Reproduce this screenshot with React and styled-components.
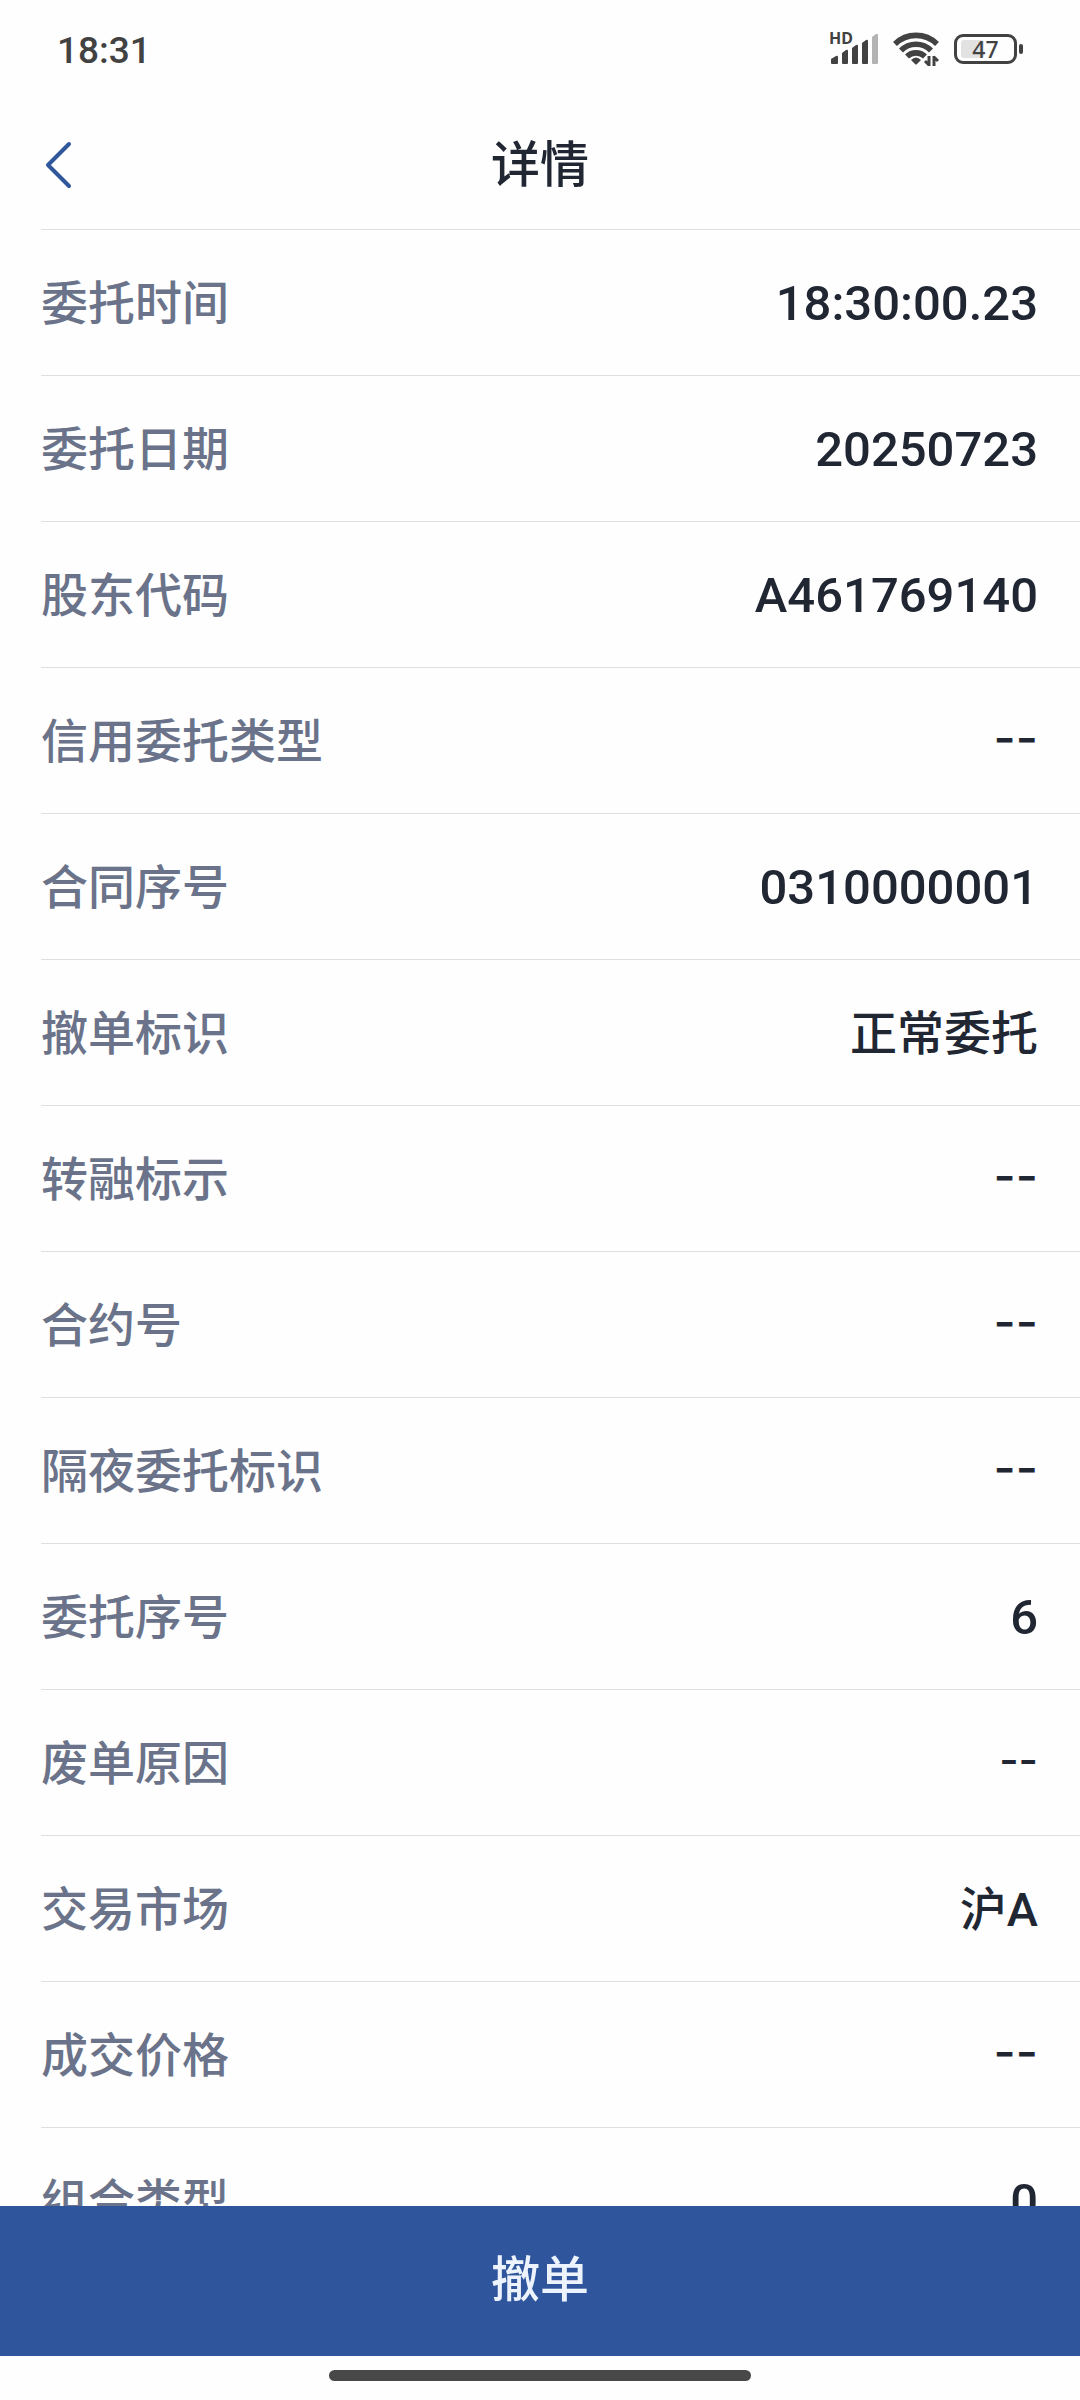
import React from "react";
import styled, { createGlobalStyle } from "styled-components";

const App = () => (
  <Screen>
    <GlobalStyle />
    <StatusBar>
      <Clock>18:31</Clock>
      <StatusIcons>
        <SignalIcon />
        <WifiIcon />
        <Battery>
          <BatteryBody>
            <BatteryFill $level={47} />
            <BatteryLevel>47</BatteryLevel>
          </BatteryBody>
          <BatteryTip />
        </Battery>
      </StatusIcons>
    </StatusBar>
    <Header>
      <BackButton type="button" aria-label="返回">
        <svg width="28" height="48" viewBox="0 0 28 48" fill="none">
          <path
            d="M24 3L3 24L24 45"
            stroke="#30569c"
            strokeWidth="4"
            strokeLinecap="round"
            strokeLinejoin="round"
          />
        </svg>
      </BackButton>
      <Title>详情</Title>
    </Header>
    <Content>
      <List>
        {details.map(({ label, value, small }) => (
          <Row key={label}>
            <Label>{label}</Label>
            {value === "--" ? (
              <Empty $small={small}>{value}</Empty>
            ) : (
              <Value $numeric={/^[\w:.]+$/.test(value)}>{value}</Value>
            )}
          </Row>
        ))}
      </List>
    </Content>
    <CancelButton type="button">撤单</CancelButton>
    <HomeArea>
      <HomeIndicator />
    </HomeArea>
  </Screen>
);
export default App;

const SignalIcon = () => (
  <svg width="52" height="50" viewBox="0 -8 52 50" fill="#424242">
    <text
      x="0"
      y="12"
      fontFamily='"Noto Sans", sans-serif'
      fontSize="16"
      fontWeight="700"
    >
      HD
    </text>
    <path d="M2 27l5-3q2-1 2 1v6q0 1-1 1H3q-1 0-1-1z" />
    <path d="M13 21l4-3q2-1 2 1v12q0 1-1 1h-4q-1 0-1-1z" />
    <path d="M23 16l4-3q2-1 2 1v17q0 1-1 1h-4q-1 0-1-1z" />
    <path d="M33 11l4-3q2-1 2 1v22q0 1-1 1h-4q-1 0-1-1z" />
    <path d="M43 5l4-3q2-1 2 1v28q0 1-1 1h-4q-1 0-1-1z" fill="#b3b3b3" />
  </svg>
);

const WifiIcon = () => (
  <svg width="46" height="36" viewBox="0 0 46 36" fill="none">
    <g stroke="#424242" strokeWidth="5.600">
      <path d="M2 13A30 30 0 0 1 44 13" />
      <path d="M8 19.500A21 21 0 0 1 38 19.500" />
      <path d="M14 25.500A13 13 0 0 1 32 25.500" />
    </g>
    <path d="M18 29q5-5 10 0l-4 4q-1 1-2 0z" fill="#424242" />
    <path
      d="M36 25v10M36 34l-4-4M41 35V25M41 26l4 4"
      stroke="#424242"
      strokeWidth="3"
    />
  </svg>
);

const details = [
  { label: "委托时间", value: "18:30:00.23" },
  { label: "委托日期", value: "20250723" },
  { label: "股东代码", value: "A461769140" },
  { label: "信用委托类型", value: "--" },
  { label: "合同序号", value: "0310000001" },
  { label: "撤单标识", value: "正常委托" },
  { label: "转融标示", value: "--" },
  { label: "合约号", value: "--" },
  { label: "隔夜委托标识", value: "--" },
  { label: "委托序号", value: "6" },
  { label: "废单原因", value: "--", small: true },
  { label: "交易市场", value: "沪A" },
  { label: "成交价格", value: "--" },
  { label: "组合类型", value: "0" },
];

const GlobalStyle = createGlobalStyle`
  * {
    box-sizing: border-box;
  }

  body {
    margin: 0;
    background: #fefefe;
    font-family: Roboto, "Noto Sans CJK SC", sans-serif;
    font-weight: 500;
  }

  button {
    border: none;
    font: inherit;
    cursor: pointer;
  }
`;

const Screen = styled.div`
  display: flex;
  flex-direction: column;
  height: 100vh;
`;

const StatusBar = styled.div`
  display: flex;
  flex-shrink: 0;
  align-items: center;
  justify-content: space-between;
  height: 98px;
  padding: 0 57px;
  color: #424242;
`;

const Clock = styled.time`
  padding-top: 2px;
  font-size: 37px;
`;

const StatusIcons = styled.div`
  display: flex;
  align-items: center;
  gap: 12px;
`;

const Battery = styled.div`
  display: flex;
  align-items: center;
  gap: 2px;
  margin-left: 3px;
`;

const BatteryBody = styled.div`
  position: relative;
  width: 63px;
  height: 30px;
  padding: 3px 4px;
  border: 3px solid #424242;
  border-radius: 9px;
`;

const BatteryFill = styled.div`
  width: ${({ $level }) => $level}%;
  height: 100%;
  border-radius: 3px;
  background: #e2e2e2;
`;

const BatteryLevel = styled.span`
  position: absolute;
  inset: 0;
  font-family: "Noto Sans", sans-serif;
  font-size: 23px;
  line-height: 24px;
  text-align: center;
`;

const BatteryTip = styled.div`
  width: 4px;
  height: 10px;
  border-radius: 2px;
  background: #424242;
`;

const Header = styled.header`
  display: grid;
  flex-shrink: 0;
  grid-template-columns: 100px 1fr 100px;
  align-items: center;
  height: 131px;
`;

const BackButton = styled.button`
  display: flex;
  align-items: center;
  height: 100%;
  padding: 2px 0 0 45px;
  background: none;
`;

const Title = styled.h1`
  margin: 0;
  padding-top: 4px;
  color: #212633;
  font-size: 49px;
  font-weight: 500;
  line-height: 60px;
  text-align: center;
`;

const Content = styled.main`
  flex: 1;
  min-height: 0;
  overflow: hidden;
`;

const List = styled.dl`
  margin: 0 0 0 41px;
`;

const Row = styled.div`
  display: flex;
  align-items: center;
  justify-content: space-between;
  height: 146px;
  padding: 2px 42px 0 0;
  border-top: 1px solid #dfdfdf;
`;

const Label = styled.dt`
  color: #6a7389;
  font-size: 47px;
  line-height: 60px;
`;

const Value = styled.dd`
  margin: 0;
  color: #212633;
  font-size: ${({ $numeric }) => ($numeric ? "49px" : "47px")};
  line-height: 60px;
`;

/* placeholder dashes for fields without data */
const Empty = styled(Value)`
  padding-bottom: 8px;
  font-family: Inter, sans-serif;
  font-size: ${({ $small }) => ($small ? "42px" : "48px")};
`;

const CancelButton = styled.button`
  flex-shrink: 0;
  height: 150px;
  padding: 0;
  background: #2f569d;
  color: #edf3fd;
  font-size: 49px;
  line-height: 60px;
`;

const HomeArea = styled.div`
  display: flex;
  flex-shrink: 0;
  align-items: center;
  justify-content: center;
  height: 44px;
  padding-bottom: 5px;
`;

const HomeIndicator = styled.div`
  width: 39%;
  height: 11px;
  border-radius: 6px;
  background: #484848;
`;
